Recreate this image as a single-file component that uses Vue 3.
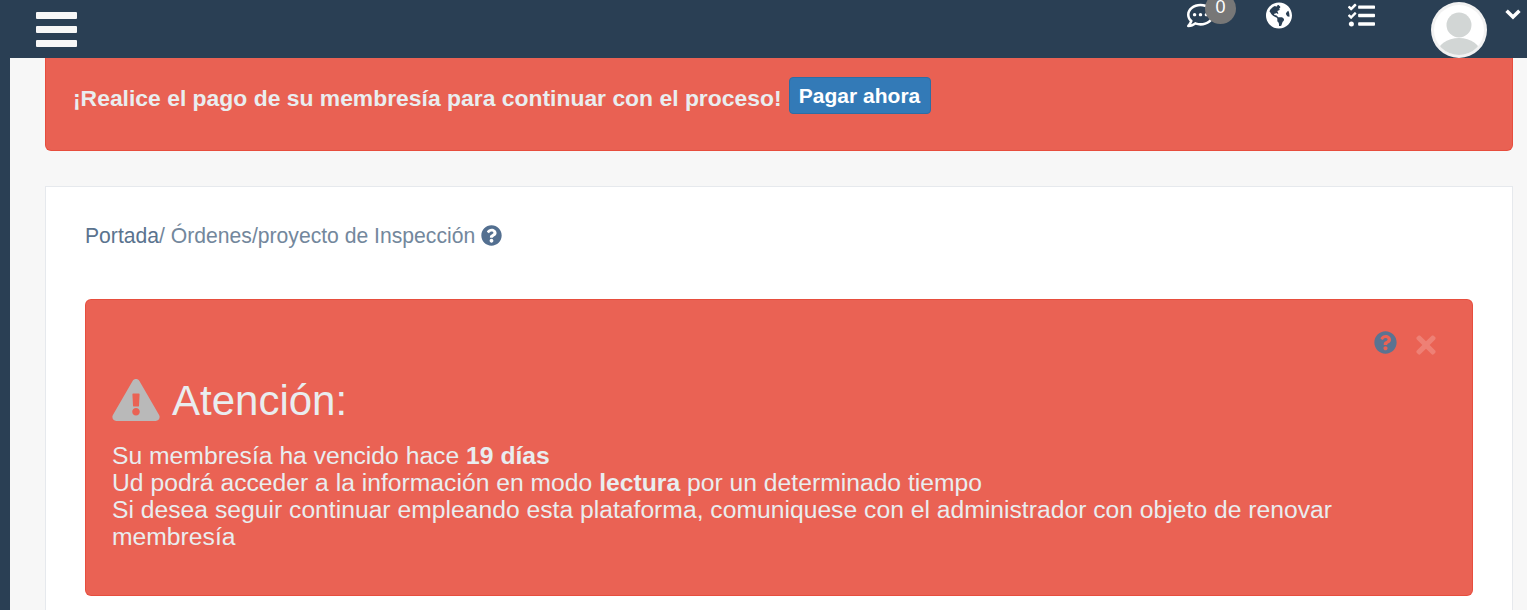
<template>
  <div class="page">
    <!-- Top bar -->
    <header class="topbar">
      <button class="burger" aria-label="Menu">
        <span /><span /><span />
      </button>
      <div class="top-actions">
        <div class="top-icon chat">
          <svg width="27" height="27" viewBox="0 0 512 512" fill="#fff">
            <path d="M144 208c-17.7 0-32 14.3-32 32s14.3 32 32 32 32-14.3 32-32-14.3-32-32-32zm112 0c-17.7 0-32 14.3-32 32s14.3 32 32 32 32-14.3 32-32-14.3-32-32-32zm112 0c-17.7 0-32 14.3-32 32s14.3 32 32 32 32-14.3 32-32-14.3-32-32-32zM256 32C114.6 32 0 125.1 0 240c0 47.6 19.9 91.2 52.9 126.3C38 405.7 7 439.1 6.5 439.5c-6.6 7-8.4 17.2-4.6 26S14.4 480 24 480c61.5 0 110-25.7 139.1-46.3C192 442.8 223.2 448 256 448c141.4 0 256-93.1 256-208S397.4 32 256 32zm0 368c-26.7 0-53.1-4.1-78.4-12.1l-22.7-7.2-19.5 13.8c-14.3 10.1-33.9 21.4-57.5 29 7.3-12.1 14.4-25.7 19.9-40.2l10.6-28.1-20.6-21.8C69.7 314.1 48 282.2 48 240c0-88.2 93.3-160 208-160s208 71.8 208 160-93.3 160-208 160z" />
          </svg>
          <span class="badge">0</span>
        </div>
        <div class="top-icon globe">
          <svg width="26" height="27" viewBox="0 0 496 512" fill="#fff">
            <path d="M248 8C111.03 8 0 119.03 0 256s111.03 248 248 248 248-111.03 248-248S384.97 8 248 8zm82.29 357.6c-3.9 3.88-7.99 7.95-11.31 11.28-2.99 3-5.1 6.7-6.17 10.71-1.51 5.66-2.73 11.38-4.77 16.87l-17.39 46.85c-13.76 3-28 4.69-42.65 4.69v-27.38c1.69-12.62-7.64-36.26-22.63-51.25-6-6-9.37-14.14-9.37-22.63v-32.01c0-11.64-6.27-22.34-16.46-27.97-14.37-7.95-34.81-19.06-48.81-26.11-11.48-5.78-22.1-13.14-31.65-21.75l-.8-.72a114.792 114.792 0 0 1-18.06-20.74c-9.38-13.77-24.66-36.42-34.59-51.14 20.47-45.5 57.36-82.04 103.2-101.89l24.01 12.01C203.48 89.74 216 82.01 216 70.11v-11.3c7.99-1.29 16.12-2.11 24.39-2.42l28.3 28.3c6.25 6.25 6.25 16.38 0 22.63L264 112l-10.34 10.34c-3.12 3.12-3.12 8.19 0 11.31l4.69 4.69c3.12 3.12 3.12 8.19 0 11.31l-8 8a8.008 8.008 0 0 1-5.66 2.34h-8.99c-2.08 0-4.08.81-5.58 2.27l-9.92 9.65a8.008 8.008 0 0 0-1.58 9.31l15.59 31.19c2.66 5.32-1.21 11.58-7.15 11.58h-5.64c-1.93 0-3.79-.7-5.24-1.96l-9.28-8.06a16.017 16.017 0 0 0-15.55-3.1l-31.17 10.39a11.95 11.95 0 0 0-8.17 11.34c0 4.53 2.56 8.66 6.61 10.69l11.08 5.54c9.41 4.71 19.79 7.16 30.31 7.16s22.59 27.29 32 32h66.75c8.49 0 16.62 3.37 22.63 9.37l13.69 13.69a30.503 30.503 0 0 1 8.93 21.57 46.536 46.536 0 0 1-13.72 32.98zM417 274.25c-5.79-1.45-10.84-5-14.15-9.97l-17.98-26.97a23.97 23.97 0 0 1 0-26.62l19.59-29.38c2.32-3.47 5.5-6.29 9.24-8.15l12.98-6.49C440.2 193.59 448 223.87 448 256c0 8.67-.74 17.16-1.82 25.54L417 274.25z" />
          </svg>
        </div>
        <div class="top-icon tasks">
          <svg width="27" height="27" viewBox="0 0 512 512" fill="#fff">
            <path d="M139.61 35.5a12 12 0 0 0-17 0L58.93 98.81l-22.7-22.12a12 12 0 0 0-17 0L3.53 92.41a12 12 0 0 0 0 17l47.59 47.4a12.78 12.78 0 0 0 17.61 0l15.59-15.62L156.52 69a12.09 12.09 0 0 0 .09-17zm0 159.19a12 12 0 0 0-17 0l-63.68 63.72-22.7-22.1a12 12 0 0 0-17 0L3.53 252a12 12 0 0 0 0 17L51 316.5a12.77 12.77 0 0 0 17.6 0l15.7-15.69 72.2-72.22a12 12 0 0 0 .09-16.9zM64 368c-26.49 0-48.59 21.5-48.59 48S37.53 464 64 464a48 48 0 0 0 0-96zm432 16H208a16 16 0 0 0-16 16v32a16 16 0 0 0 16 16h288a16 16 0 0 0 16-16v-32a16 16 0 0 0-16-16zm0-320H208a16 16 0 0 0-16 16v32a16 16 0 0 0 16 16h288a16 16 0 0 0 16-16V80a16 16 0 0 0-16-16zm0 160H208a16 16 0 0 0-16 16v32a16 16 0 0 0 16 16h288a16 16 0 0 0 16-16v-32a16 16 0 0 0-16-16z" />
          </svg>
        </div>
        <div class="avatar">
          <svg width="56" height="56" viewBox="0 0 56 56">
            <defs>
              <clipPath id="av-clip"><circle cx="28" cy="28" r="25" /></clipPath>
            </defs>
            <circle cx="28" cy="28" r="28" fill="#f2f2f2" />
            <circle cx="28" cy="28" r="25" fill="#fff" />
            <g clip-path="url(#av-clip)" fill="#d2d6d5">
              <circle cx="28" cy="23" r="12.5" />
              <ellipse cx="28" cy="52" rx="22" ry="16" />
            </g>
          </svg>
        </div>
        <svg class="chevron" width="16" height="11" viewBox="0 0 16 11" fill="none" stroke="#fff" stroke-width="3.6">
          <polyline points="1.6,1.8 8,8 14.4,1.8" />
        </svg>
      </div>
    </header>

    <div class="main-row">
      <div class="rail" />
      <main class="content">
        <!-- Payment banner -->
        <div class="pay-banner">
          <span class="pay-text">¡Realice el pago de su membresía para continuar con el proceso!</span>
          <button class="pay-btn">Pagar ahora</button>
        </div>

        <section class="card">
          <div class="crumbs">
            <a class="crumb-home">Portada</a><span>/ Órdenes/proyecto de Inspección</span>
            <svg class="crumb-help" width="21" height="21" viewBox="0 0 512 512" fill="#536f90">
              <path d="M504 256c0 136.997-111.043 248-248 248S8 392.997 8 256C8 119.083 119.043 8 256 8s248 111.083 248 248zM262.655 90c-54.497 0-89.255 22.957-116.549 63.758-3.536 5.286-2.353 12.415 2.715 16.258l34.699 26.31c5.205 3.947 12.621 3.008 16.665-2.122 17.864-22.658 30.113-35.797 57.303-35.797 20.429 0 45.698 13.148 45.698 32.958 0 14.976-12.363 22.667-32.534 33.976C247.128 238.528 216 254.941 216 296v4c0 6.627 5.373 12 12 12h56c6.627 0 12-5.373 12-12v-1.333c0-28.462 83.186-29.647 83.186-106.667 0-58.002-60.165-102-116.531-102zM256 338c-25.365 0-46 20.635-46 46 0 25.364 20.635 46 46 46s46-20.636 46-46c0-25.365-20.635-46-46-46z" />
            </svg>
          </div>

          <div class="alert">
            <div class="alert-tools">
              <svg class="alert-help" width="23" height="23" viewBox="0 0 512 512" fill="#5b7391">
                <path d="M504 256c0 136.997-111.043 248-248 248S8 392.997 8 256C8 119.083 119.043 8 256 8s248 111.083 248 248zM262.655 90c-54.497 0-89.255 22.957-116.549 63.758-3.536 5.286-2.353 12.415 2.715 16.258l34.699 26.31c5.205 3.947 12.621 3.008 16.665-2.122 17.864-22.658 30.113-35.797 57.303-35.797 20.429 0 45.698 13.148 45.698 32.958 0 14.976-12.363 22.667-32.534 33.976C247.128 238.528 216 254.941 216 296v4c0 6.627 5.373 12 12 12h56c6.627 0 12-5.373 12-12v-1.333c0-28.462 83.186-29.647 83.186-106.667 0-58.002-60.165-102-116.531-102zM256 338c-25.365 0-46 20.635-46 46 0 25.364 20.635 46 46 46s46-20.636 46-46c0-25.365-20.635-46-46-46z" />
              </svg>
              <svg class="alert-close" width="20" height="28" viewBox="0 0 352 512" fill="#ee8075">
                <path d="M242.72 256l100.07-100.07c12.28-12.28 12.28-32.19 0-44.48l-22.24-22.24c-12.28-12.28-32.19-12.28-44.48 0L176 189.28 75.93 89.21c-12.28-12.28-32.19-12.28-44.48 0L9.21 111.45c-12.28 12.28-12.28 32.19 0 44.48L109.28 256 9.21 356.07c-12.28 12.28-12.28 32.19 0 44.48l22.24 22.24c12.28 12.28 32.2 12.28 44.48 0L176 322.72l100.07 100.07c12.28 12.28 32.2 12.28 44.48 0l22.24-22.24c12.28-12.28 12.28-32.19 0-44.48L242.72 256z" />
              </svg>
            </div>
            <h2 class="alert-title">
              <svg class="alert-warn" width="48" height="42" viewBox="0 0 576 512" fill="#b9b9b9">
                <path d="M569.517 440.013C587.975 472.007 564.806 512 527.94 512H48.054c-36.937 0-59.999-40.055-41.577-71.987L246.423 23.985c18.467-32.009 64.72-31.951 83.154 0l239.94 416.028zM288 354c-25.405 0-46 20.595-46 46s20.595 46 46 46 46-20.595 46-46-20.595-46-46-46zm-43.673-165.346l7.418 136c.347 6.364 5.609 11.346 11.982 11.346h48.546c6.373 0 11.635-4.982 11.982-11.346l7.418-136c.375-6.874-5.098-12.654-11.982-12.654h-63.383c-6.884 0-12.356 5.78-11.981 12.654z" />
              </svg>
              Atención:
            </h2>
            <p class="alert-body">
              Su membresía ha vencido hace <b>19 días</b><br>
              Ud podrá acceder a la información en modo <b>lectura</b> por un determinado tiempo<br>
              Si desea seguir continuar empleando esta plataforma, comuniquese con el administrador con objeto de renovar membresía
            </p>
          </div>
        </section>
      </main>
    </div>
  </div>
</template>

<script setup>
</script>

<style>
html, body {
  margin: 0;
  overflow: hidden;
}
</style>

<style scoped>
.page {
  width: 1527px;
  height: 610px;
  overflow: hidden;
  font-family: "Liberation Sans", Arial, sans-serif;
  background: #f7f7f7;
}

/* ── Top bar ── */
.topbar {
  height: 58px;
  background: #2a3f54;
  display: flex;
  align-items: flex-start;
  justify-content: space-between;
  padding-left: 36px;
  box-sizing: border-box;
}

.burger {
  width: 41px;
  margin-top: 12px;
  padding: 0;
  border: none;
  background: none;
  display: flex;
  flex-direction: column;
  gap: 7px;
}

.burger span {
  display: block;
  height: 7px;
  background: #f7f7f7;
  border-radius: 1px;
}

.top-actions {
  display: flex;
  align-items: flex-start;
  padding-right: 6px;
}

.top-icon {
  position: relative;
  margin-top: 2px;
  display: flex;
}

.chat {
  margin-right: 52px;
  margin-left: 1px;
}

.globe {
  margin-right: 56px;
}

.tasks {
  margin-right: 56px;
}

/* circle runs off the top of the page, so the box stops at y=0 and is clipped */
.badge {
  position: absolute;
  left: 18px;
  top: -2px;
  width: 31px;
  height: 24px;
  background: #777;
  clip-path: circle(15.5px at 15.5px 8.5px);
  color: #fff;
  font-size: 18px;
  line-height: 15px;
  text-align: center;
}

.avatar {
  margin-top: 2px;
  height: 56px;
  margin-right: 18px;
}

.chevron {
  margin-top: 9px;
}

/* ── Body ── */
.main-row {
  display: flex;
}

.rail {
  width: 10px;
  height: 552px;
  background: #2a3f54;
  flex-shrink: 0;
}

.content {
  flex: 1;
  padding: 0 14px 0 35px;
  min-width: 0;
}

.pay-banner {
  height: 93px;
  box-sizing: border-box;
  background: rgba(231, 76, 60, 0.88);
  border: 1px solid rgba(231, 76, 60, 0.88);
  border-top: none;
  border-radius: 0 0 6px 6px;
  padding: 19px 0 0 27px;
  display: flex;
  align-items: flex-start;
  gap: 7px;
}

.pay-text {
  color: #e9edef;
  font-size: 22.9px;
  font-weight: 700;
  line-height: 42px;
}

.pay-btn {
  width: 142px;
  height: 37px;
  box-sizing: border-box;
  padding: 0;
  background: #337ab7;
  border: 1px solid #2e6da4;
  border-radius: 4px;
  color: #fff;
  font-family: inherit;
  font-size: 21px;
  font-weight: 700;
}

.card {
  margin-top: 35px;
  height: 450px;
  background: #fff;
  border: 1px solid #e6e9ed;
  padding: 0 39px;
}

.crumbs {
  height: 112px;
  padding-top: 36px;
  box-sizing: border-box;
  display: flex;
  align-items: flex-start;
  color: #73879c;
  font-size: 21.15px;
  line-height: 26px;
}

.crumb-home {
  color: #5a738e;
}

.crumb-help {
  margin: 2px 0 0 6px;
}

.alert {
  position: relative;
  height: 297px;
  box-sizing: border-box;
  background: rgba(231, 76, 60, 0.88);
  border: 1px solid rgba(231, 76, 60, 0.88);
  border-radius: 6px;
  padding: 73px 26px 0;
  color: #e9edef;
}

.alert-tools {
  position: absolute;
  top: 29px;
  right: 36px;
  display: flex;
  align-items: flex-start;
  gap: 19px;
}

.alert-help {
  margin-top: 2px;
}

.alert-close {
  margin-top: 2px;
}

.alert-title {
  margin: 0;
  display: flex;
  align-items: center;
  gap: 12px;
  font-size: 42px;
  font-weight: 400;
  line-height: 56px;
}

.alert-warn {
  margin-top: -3px;
}

.alert-body {
  margin: 13px 0 0;
  font-size: 24.7px;
  line-height: 27px;
}
</style>
